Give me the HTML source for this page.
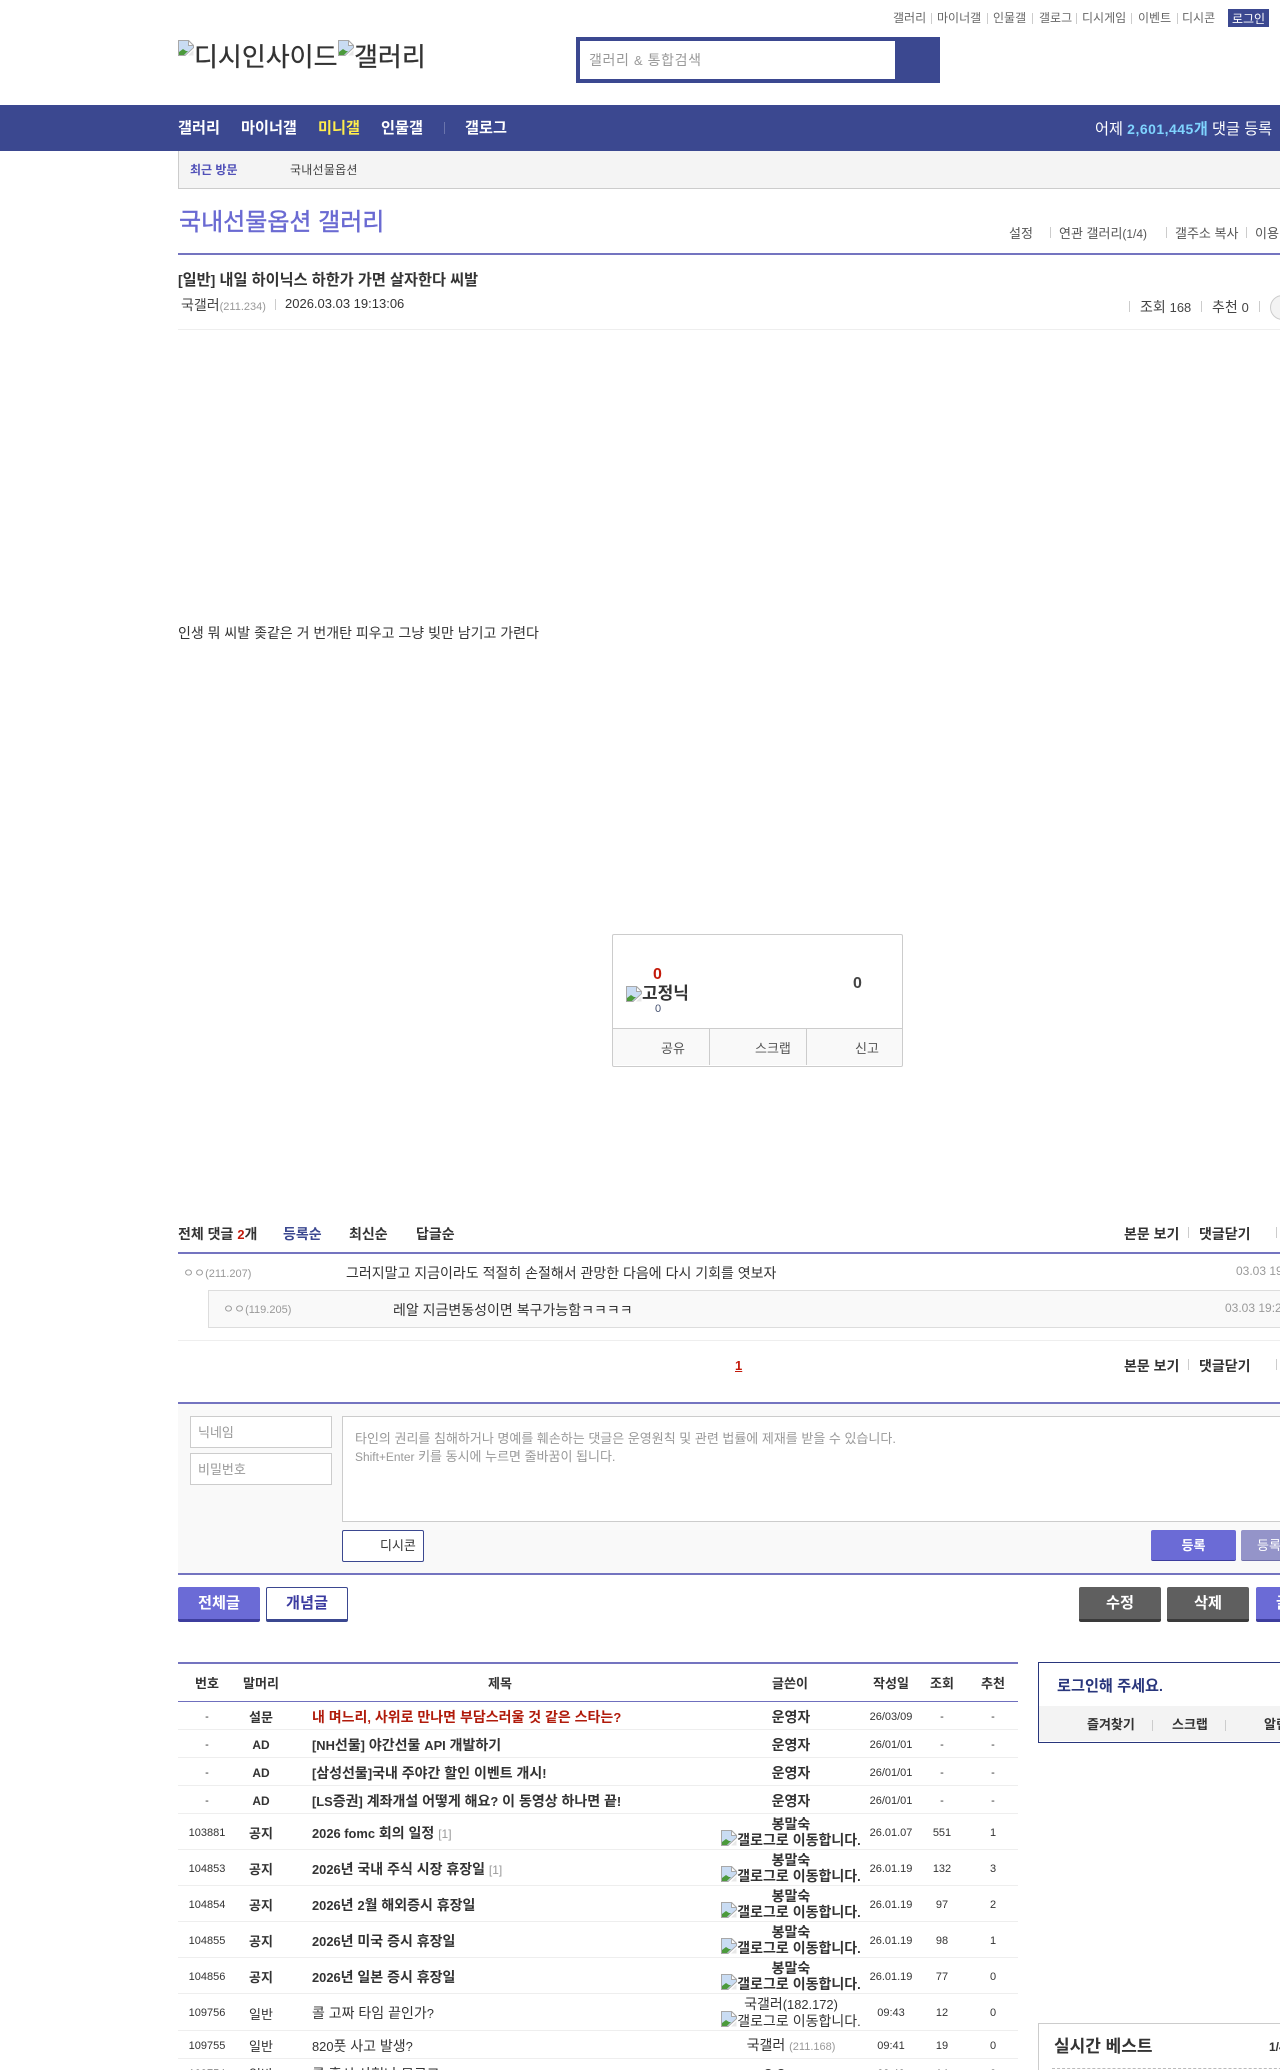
<!DOCTYPE html>
<html lang="ko"><head><meta charset="utf-8"><title>국내선물옵션 갤러리</title>
<style>
html,body{margin:0;padding:0;width:1280px;height:2070px;overflow:hidden;background:#fff}
body{position:relative;font-family:"Liberation Sans","Noto Sans CJK KR",sans-serif;color:#333;font-size:13px}
i{font-style:normal}
.l{font-size:.92em}
.a{position:absolute}
.t{position:absolute;white-space:nowrap;line-height:20px;height:20px}
.b{font-weight:bold}
.d{position:absolute;width:1px;height:11px;background:#ccc}
svg.i{display:inline-block;width:16px;height:16px;vertical-align:-1px;margin-top:-5px}
svg.abs{position:absolute;width:16px;height:16px}
.btn{position:absolute;box-sizing:border-box;text-align:center;color:#fff;font-weight:bold;border-radius:2px}
table{position:absolute;left:178px;top:1664px;width:840px;border-collapse:collapse;table-layout:fixed}
td,th{padding:0;text-align:center;border-bottom:1px solid #eee;font-size:11px;color:#333;overflow:visible;white-space:nowrap}
th{font-size:13px;height:37px;border-bottom:1px solid #6f6fbe}
tr.r td{height:25px;padding-top:2px}
tr.n td{height:33px;padding-top:2px}
td.s{text-align:left;padding-left:26px;font-size:14px}
td.m{font-size:13px}
td.w{font-size:14px;line-height:16px;padding-left:2px}
.bd td.s,.bd td.m,.bd td.w{font-weight:bold}
.rp{color:#999;font-weight:normal;font-size:12px}
.ip{color:#999;font-size:11px}
</style></head><body>
<svg width="0" height="0" style="position:absolute"><symbol id="bk" viewBox="0 0 16 16"><path d="M.5.5h10l5 5v2.200L7 15.500H.5z" fill="#c9dcf3" stroke="#a8a8a8"/><path d="M10.500.5v5h5z" fill="#fff" stroke="#a8a8a8"/><path d="M1 15v-3l4-3 3 2h2l-4 4z" fill="#4c9a3c"/><path d="M15.500 10v5.500H10z" fill="#e8e8e8"/></symbol></svg>

<!-- top links -->
<div class="t" style="left:893px;top:8px;font-size:12px;color:#666">갤러리</div><div class="d" style="left:931px;top:13px"></div>
<div class="t" style="left:937px;top:8px;font-size:12px;color:#666">마이너갤</div><div class="d" style="left:987px;top:13px"></div>
<div class="t" style="left:993px;top:8px;font-size:12px;color:#666">인물갤</div><div class="d" style="left:1032px;top:13px"></div>
<div class="t" style="left:1039px;top:8px;font-size:12px;color:#666">갤로그</div><div class="d" style="left:1076px;top:13px"></div>
<div class="t" style="left:1082px;top:8px;font-size:12px;color:#666">디시게임</div><div class="d" style="left:1131px;top:13px"></div>
<div class="t" style="left:1138px;top:8px;font-size:12px;color:#666">이벤트</div><div class="d" style="left:1177px;top:13px"></div>
<div class="t" style="left:1182px;top:8px;font-size:12px;color:#666">디시콘</div>
<div class="a" style="left:1228px;top:9px;width:41px;height:18px;background:#3b4890;color:#fff;font-size:12px;line-height:20px;text-align:center">로그인</div>

<!-- logo -->
<svg class="abs" style="left:178px;top:40px"><use href="#bk"/></svg>
<div class="t" style="left:194px;top:41px;height:32px;line-height:32px;font-size:26px;color:#333;-webkit-text-stroke:.3px #333">디시인사이드</div>
<svg class="abs" style="left:338px;top:40px"><use href="#bk"/></svg>
<div class="t" style="left:354px;top:41px;height:32px;line-height:32px;font-size:26px;color:#333;-webkit-text-stroke:.3px #333">갤러리</div>

<!-- search -->
<div class="a" style="left:576px;top:37px;width:364px;height:46px;background:#3b4890"></div>
<div class="a" style="left:580px;top:41px;width:315px;height:38px;background:#fff"></div>
<div class="t" style="left:589px;top:50px;font-size:14px;color:#999;letter-spacing:.6px">갤러리 <i class="l">&amp;</i> 통합검색</div>

<!-- nav -->
<div class="a" style="left:0;top:105px;width:1280px;height:46px;background:#3b4890"></div>
<div class="t b" style="left:178px;top:119px;font-size:15.2px;color:#fff">갤러리</div>
<div class="t b" style="left:241px;top:119px;font-size:15.2px;color:#fff">마이너갤</div>
<div class="t b" style="left:318px;top:119px;font-size:15.2px;color:#ffed4c">미니갤</div>
<div class="t b" style="left:381px;top:119px;font-size:15.2px;color:#fff">인물갤</div>
<div class="a" style="left:444px;top:122px;width:1px;height:12px;background:#6a74ac"></div>
<div class="t b" style="left:465px;top:119px;font-size:15.2px;color:#fff">갤로그</div>
<div class="t" style="left:1095px;top:119px;font-size:15.2px;color:#fff">어제 <b style="color:#7fd4ff"><i class="l" style="letter-spacing:.5px">2,601,445</i>개</b> 댓글 등록</div>

<!-- recent -->
<div class="a" style="left:178px;top:151px;width:1102px;height:37px;background:#f4f4f4;border-left:1px solid #ccc;border-bottom:1px solid #ccc"></div>
<div class="t b" style="left:190px;top:160px;font-size:12px;color:#5050b8">최근 방문</div>
<div class="t" style="left:290px;top:160px;font-size:12px;color:#444;letter-spacing:.02em">국내선물옵션</div>

<!-- title -->
<div class="t" style="left:179px;top:208px;height:30px;line-height:30px;font-size:24px;color:#6a6ad2;-webkit-text-stroke:.4px #6a6ad2">국내선물옵션 갤러리</div>
<div class="t" style="left:1009px;top:224px;font-size:13px;color:#555">설정</div><div class="d" style="left:1050px;top:227px"></div>
<div class="t" style="left:1059px;top:224px;font-size:13px;color:#555">연관 갤러리<i class="l">(1/4)</i></div><div class="d" style="left:1166px;top:227px"></div>
<div class="t" style="left:1175px;top:224px;font-size:13px;color:#555">갤주소 복사</div><div class="d" style="left:1246px;top:227px"></div>
<div class="t" style="left:1255px;top:224px;font-size:13px;color:#555">이용</div>
<div class="a" style="left:178px;top:253px;width:1102px;height:2px;background:#7474c0"></div>

<!-- post head -->
<div class="t b" style="left:178px;top:270px;font-size:15.2px;color:#333"><i class="l">[</i>일반<i class="l">]</i> 내일 하이닉스 하한가 가면 살자한다 씨발</div>
<div class="t" style="left:181px;top:295px;font-size:14px;color:#444">국갤러<span class="ip">(211.234)</span></div>
<div class="d" style="left:275px;top:299px"></div>
<div class="t l" style="left:285px;top:294px;font-size:13px;color:#333">2026.03.03 19:13:06</div>
<div class="d" style="left:1129px;top:301px"></div>
<div class="t" style="left:1140px;top:297px;font-size:14px;color:#444">조회 <i class="l">168</i></div>
<div class="d" style="left:1201px;top:301px"></div>
<div class="t" style="left:1212px;top:297px;font-size:14px;color:#444">추천 <i class="l">0</i></div>
<div class="d" style="left:1259px;top:301px"></div>
<div class="a" style="left:1270px;top:295px;width:23px;height:23px;border-radius:50%;background:#f3f3f3;border:1px solid #ccc"></div>
<div class="a" style="left:178px;top:329px;width:1102px;height:1px;background:#eee"></div>

<!-- body -->
<div class="t" style="left:178px;top:623px;font-size:14px;color:#333">인생 뭐 씨발 좆같은 거 번개탄 피우고 그냥 빚만 남기고 가련다</div>

<!-- recommend box -->
<div class="a" style="left:612px;top:934px;width:289px;height:131px;border:1px solid #ccc;border-radius:2px"></div>
<div class="a" style="left:613px;top:1028px;width:289px;height:37px;background:#f9f9f9;border-top:1px solid #ccc;box-sizing:border-box"></div>
<div class="a" style="left:709px;top:1028px;width:1px;height:37px;background:#ccc"></div>
<div class="a" style="left:806px;top:1028px;width:1px;height:37px;background:#ccc"></div>
<div class="t b l" style="left:653px;top:965px;font-size:16px;color:#c31a0a">0</div>
<svg class="abs" style="left:626px;top:986px"><use href="#bk"/></svg>
<div class="t b" style="left:642px;top:984px;font-size:17px;color:#333">고정닉</div>
<div class="t l" style="left:655px;top:999px;font-size:11px;color:#44506f">0</div>
<div class="t b l" style="left:853px;top:974px;font-size:16px;color:#444">0</div>
<div class="t" style="left:661px;top:1039px;font-size:13px;color:#555">공유</div>
<div class="t" style="left:755px;top:1039px;font-size:13px;color:#555">스크랩</div>
<div class="t" style="left:855px;top:1039px;font-size:13px;color:#555">신고</div>

<!-- comments -->
<div class="t b" style="left:178px;top:1224px;font-size:14px;color:#333">전체 댓글 <i class="l" style="color:#c31a0a">2</i>개</div>
<div class="t b" style="left:283px;top:1224px;font-size:14px;color:#3b4890">등록순</div>
<div class="t b" style="left:349px;top:1224px;font-size:14px;color:#333">최신순</div>
<div class="t b" style="left:416px;top:1224px;font-size:14px;color:#333">답글순</div>
<div class="t b" style="left:1124px;top:1224px;font-size:14px;color:#333">본문 보기</div><div class="d" style="left:1188px;top:1227px"></div>
<div class="t b" style="left:1199px;top:1224px;font-size:14px;color:#333">댓글닫기</div><div class="d" style="left:1276px;top:1227px"></div>
<div class="a" style="left:178px;top:1252px;width:1102px;height:2px;background:#7474c0"></div>

<div class="t" style="left:183px;top:1263px;font-size:12px;color:#999">ㅇㅇ<span class="ip">(211.207)</span></div>
<div class="t" style="left:346px;top:1263px;font-size:14px;color:#333">그러지말고 지금이라도 적절히 손절해서 관망한 다음에 다시 기회를 엿보자</div>
<div class="t l" style="left:1236px;top:1261px;font-size:12px;color:#999">03.03 19:15:22</div>

<div class="a" style="left:208px;top:1290px;width:1072px;height:36px;background:#f9f9f9;border:1px solid #ddd;border-right:0"></div>
<div class="t" style="left:223px;top:1299px;font-size:12px;color:#999">ㅇㅇ<span class="ip">(119.205)</span></div>
<div class="t" style="left:393px;top:1300px;font-size:14px;color:#333">레알 지금변동성이면 복구가능함ㅋㅋㅋㅋ</div>
<div class="t l" style="left:1225px;top:1298px;font-size:12px;color:#999">03.03 19:20:11</div>
<div class="a" style="left:178px;top:1340px;width:1102px;height:1px;background:#eee"></div>

<div class="t b l" style="left:735px;top:1356px;font-size:13px;color:#c31a0a;text-decoration:underline">1</div>
<div class="t b" style="left:1124px;top:1356px;font-size:14px;color:#333">본문 보기</div><div class="d" style="left:1188px;top:1359px"></div>
<div class="t b" style="left:1199px;top:1356px;font-size:14px;color:#333">댓글닫기</div><div class="d" style="left:1276px;top:1359px"></div>

<!-- comment form -->
<div class="a" style="left:178px;top:1402px;width:1102px;height:2px;background:#7474c0"></div>
<div class="a" style="left:178px;top:1404px;width:1102px;height:169px;background:#f9f9f9"></div>
<div class="a" style="left:178px;top:1573px;width:1102px;height:2px;background:#7474c0"></div>
<div class="a" style="left:190px;top:1416px;width:140px;height:30px;background:#fff;border:1px solid #ccc"></div>
<div class="t" style="left:198px;top:1423px;font-size:13px;color:#999">닉네임</div>
<div class="a" style="left:190px;top:1453px;width:140px;height:30px;background:#fff;border:1px solid #ccc"></div>
<div class="t" style="left:198px;top:1460px;font-size:13px;color:#999">비밀번호</div>
<div class="a" style="left:342px;top:1416px;width:960px;height:104px;background:#fff;border:1px solid #ccc"></div>
<div class="t" style="left:355px;top:1429px;font-size:13px;color:#999">타인의 권리를 침해하거나 명예를 훼손하는 댓글은 운영원칙 및 관련 법률에 제재를 받을 수 있습니다.</div>
<div class="t" style="left:355px;top:1447px;font-size:13px;color:#999"><i class="l">Shift+Enter</i> 키를 동시에 누르면 줄바꿈이 됩니다.</div>
<div class="a" style="left:342px;top:1530px;width:80px;height:30px;background:#fff;border:1px solid #3b4890;border-radius:2px"></div>
<div class="t" style="left:380px;top:1536px;font-size:13px;color:#333">디시콘</div>
<div class="btn" style="left:1151px;top:1530px;width:85px;height:31px;background:#6b6bd6;border-bottom:1px solid #3e3e9e;font-size:13px;line-height:31px">등록</div>
<div class="btn" style="left:1241px;top:1530px;width:85px;height:31px;background:#9494c9;border-bottom:1px solid #6e6ea8;font-size:13px;line-height:31px;text-align:left;padding-left:16px;font-weight:normal">등록</div>

<!-- buttons -->
<div class="btn" style="left:178px;top:1587px;width:82px;height:35px;background:#6b6bd6;border-bottom:3px solid #3e3e9e;font-size:15.2px;line-height:33px">전체글</div>
<div class="btn" style="left:266px;top:1587px;width:82px;height:35px;background:#fff;border:1px solid #3b4890;border-bottom:3px solid #3b4890;color:#3b3ba0;font-size:15.2px;line-height:32px">개념글</div>
<div class="btn" style="left:1079px;top:1587px;width:82px;height:35px;background:#5f5f5f;border-bottom:3px solid #3a3a3a;font-size:15.2px;line-height:33px">수정</div>
<div class="btn" style="left:1167px;top:1587px;width:82px;height:35px;background:#5f5f5f;border-bottom:3px solid #3a3a3a;font-size:15.2px;line-height:33px">삭제</div>
<div class="btn" style="left:1256px;top:1587px;width:82px;height:35px;background:#6b6bd6;border-bottom:3px solid #3e3e9e;font-size:15.2px;line-height:33px">글쓰기</div>

<!-- list -->
<div class="a" style="left:178px;top:1662px;width:840px;height:2px;background:#7474c0"></div>
<table>
<colgroup><col style="width:58px"><col style="width:50px"><col style="width:428px"><col style="width:152px"><col style="width:50px"><col style="width:52px"><col style="width:50px"></colgroup>
<tr><th>번호</th><th>말머리</th><th>제목</th><th>글쓴이</th><th>작성일</th><th>조회</th><th>추천</th></tr>
<tr class="r bd"><td>-</td><td class="m">설문</td><td class="s" style="color:#b01a0a">내 며느리<i class="l">,</i> 사위로 만나면 부담스러울 것 같은 스타는<i class="l">?</i></td><td class="w">운영자</td><td>26/03/09</td><td>-</td><td>-</td></tr>
<tr class="r bd"><td>-</td><td class="m"><i class="l">AD</i></td><td class="s"><i class="l">[NH</i>선물<i class="l">]</i> 야간선물 <i class="l">API</i> 개발하기</td><td class="w">운영자</td><td>26/01/01</td><td>-</td><td>-</td></tr>
<tr class="r bd"><td>-</td><td class="m"><i class="l">AD</i></td><td class="s"><i class="l">[</i>삼성선물<i class="l">]</i>국내 주야간 할인 이벤트 개시<i class="l">!</i></td><td class="w">운영자</td><td>26/01/01</td><td>-</td><td>-</td></tr>
<tr class="r bd"><td>-</td><td class="m"><i class="l">AD</i></td><td class="s"><i class="l">[LS</i>증권<i class="l">]</i> 계좌개설 어떻게 해요<i class="l">?</i> 이 동영상 하나면 끝<i class="l">!</i></td><td class="w">운영자</td><td>26/01/01</td><td>-</td><td>-</td></tr>
<tr class="n bd"><td>103881</td><td class="m">공지</td><td class="s"><i class="l">2026 fomc</i> 회의 일정 <span class="rp">[1]</span></td><td class="w">봉말숙<br><svg class="i"><use href="#bk"/></svg>갤로그로 이동합니다<i class="l">.</i></td><td>26.01.07</td><td>551</td><td>1</td></tr>
<tr class="n bd"><td>104853</td><td class="m">공지</td><td class="s"><i class="l">2026</i>년 국내 주식 시장 휴장일 <span class="rp">[1]</span></td><td class="w">봉말숙<br><svg class="i"><use href="#bk"/></svg>갤로그로 이동합니다<i class="l">.</i></td><td>26.01.19</td><td>132</td><td>3</td></tr>
<tr class="n bd"><td>104854</td><td class="m">공지</td><td class="s"><i class="l">2026</i>년 <i class="l">2</i>월 해외증시 휴장일</td><td class="w">봉말숙<br><svg class="i"><use href="#bk"/></svg>갤로그로 이동합니다<i class="l">.</i></td><td>26.01.19</td><td>97</td><td>2</td></tr>
<tr class="n bd"><td>104855</td><td class="m">공지</td><td class="s"><i class="l">2026</i>년 미국 증시 휴장일</td><td class="w">봉말숙<br><svg class="i"><use href="#bk"/></svg>갤로그로 이동합니다<i class="l">.</i></td><td>26.01.19</td><td>98</td><td>1</td></tr>
<tr class="n bd"><td>104856</td><td class="m">공지</td><td class="s"><i class="l">2026</i>년 일본 증시 휴장일</td><td class="w">봉말숙<br><svg class="i"><use href="#bk"/></svg>갤로그로 이동합니다<i class="l">.</i></td><td>26.01.19</td><td>77</td><td>0</td></tr>
<tr class="n"><td>109756</td><td class="m">일반</td><td class="s">콜 고짜 타임 끝인가<i class="l">?</i></td><td class="w">국갤러<i class="l">(182.172)</i><br><svg class="i"><use href="#bk"/></svg>갤로그로 이동합니다<i class="l">.</i></td><td>09:43</td><td>12</td><td>0</td></tr>
<tr class="r"><td>109755</td><td class="m">일반</td><td class="s"><i class="l">820</i>풋 사고 발생<i class="l">?</i></td><td class="w">국갤러 <span class="ip">(211.168)</span></td><td>09:41</td><td>19</td><td>0</td></tr>
<tr class="r"><td>109754</td><td class="m">일반</td><td class="s">콜 혹시 사형나 모르고</td><td class="w">ㅇㅇ <span class="ip">(39.7)</span></td><td>09:40</td><td>14</td><td>0</td></tr>
</table>

<!-- sidebar -->
<div class="a" style="left:1038px;top:1662px;width:300px;height:79px;border:1px solid #29367c"></div>
<div class="a" style="left:1039px;top:1706px;width:300px;height:35px;background:#f3f3f3"></div>
<div class="t b" style="left:1057px;top:1676px;font-size:15.2px;color:#29367c">로그인해 주세요<i class="l">.</i></div>
<div class="t b" style="left:1087px;top:1715px;font-size:13px;color:#333">즐겨찾기</div><div class="d" style="left:1152px;top:1720px"></div>
<div class="t b" style="left:1172px;top:1715px;font-size:13px;color:#333">스크랩</div><div class="d" style="left:1225px;top:1720px"></div>
<div class="t b" style="left:1264px;top:1715px;font-size:13px;color:#333">알림</div>
<div class="a" style="left:1038px;top:2023px;width:300px;height:60px;border:1px solid #ccc"></div>
<div class="t b" style="left:1054px;top:2037px;font-size:17px;color:#333">실시간 베스트</div>
<div class="t b l" style="left:1269px;top:2037px;font-size:12px;color:#333">1/4</div>
<div class="a" style="left:1052px;top:2068px;width:240px;border-top:1px dashed #bbb"></div>
</body></html>
